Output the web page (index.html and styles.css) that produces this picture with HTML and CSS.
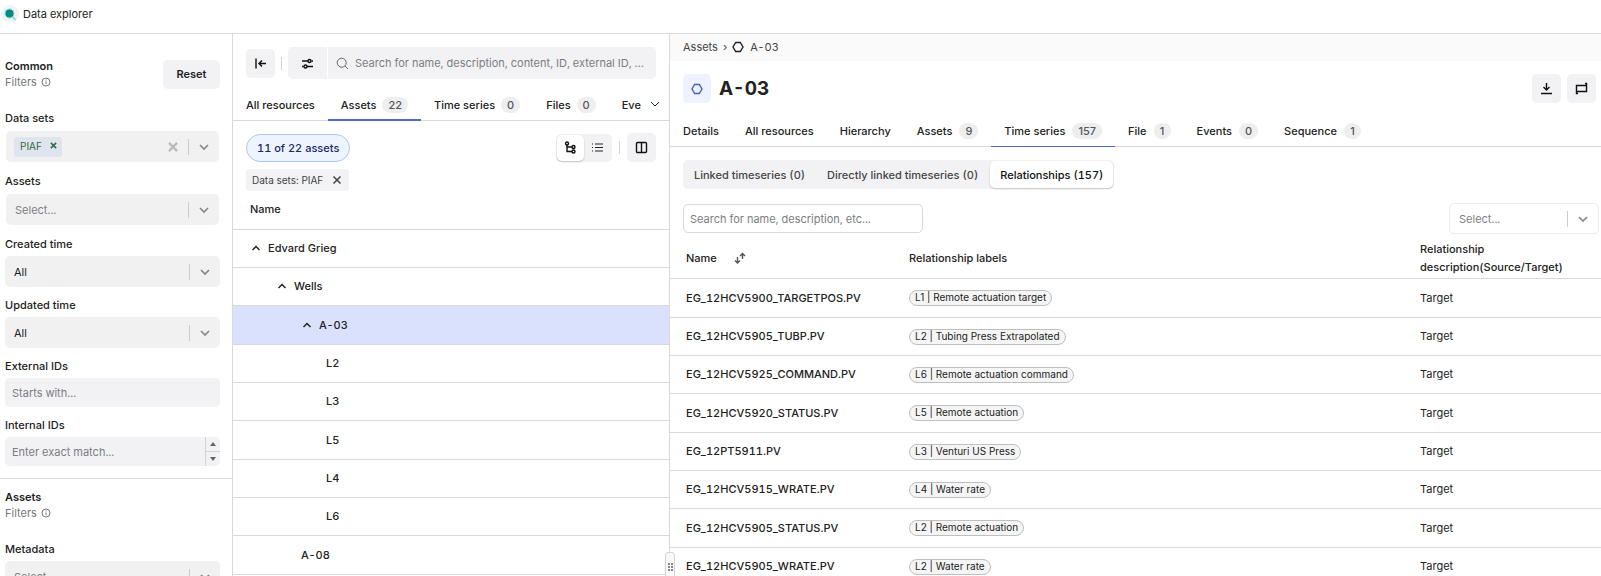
FILE: index.html
```html
<!DOCTYPE html>
<html lang="en">
<head>
    <meta charset="UTF-8">
    <meta name="viewport" content="width=device-width, initial-scale=1.0">
    <title>Data explorer</title>
    <link rel="stylesheet" href="styles.css">
</head>
<body>
    <!-- shared icons -->
    <svg class="sprite" aria-hidden="true">
        <symbol id="chevron-down" viewBox="0 0 12 12"><path d="M2 4l4 4 4-4"/></symbol>
        <symbol id="chevron-up" viewBox="0 0 12 12"><path d="M2.5 8L6 4.5 9.5 8"/></symbol>
        <symbol id="cross" viewBox="0 0 12 12"><path d="M2.5 2.5l7 7M9.5 2.5l-7 7"/></symbol>
        <symbol id="info" viewBox="0 0 12 12"><circle cx="6" cy="6" r="4"/><path d="M6 5.5v2.7M6 3.6v1"/></symbol>
        <symbol id="hexagon" viewBox="0 0 12 12"><path d="M3.7 1.5h4.6L11 6l-2.7 4.5H3.7L1 6z"/></symbol>
    </svg>

    <header class="topbar">
        <span class="logo">
            <svg width="18" height="18" viewBox="0 0 18 18"><path d="M11 11l3.5 4" stroke="#8fe0dc" stroke-width="2"/><circle cx="8.5" cy="8.5" r="4.5" fill="#058a86" stroke="#8fe0dc" stroke-width="1"/></svg>
        </span>
        <span>Data explorer</span>
    </header>

    <main class="layout">
        <aside class="filters">
            <section class="filter-group">
                <div class="filter-head">
                    <div>
                        <h2>Common</h2>
                        <p>Filters <svg class="icon"><use href="#info"/></svg></p>
                    </div>
                    <button class="btn reset">Reset</button>
                </div>
                <div class="field">
                    <label for="datasets">Data sets</label>
                    <div class="select inset">
                        <span class="tag">PIAF <button aria-label="Remove PIAF"><svg class="icon"><use href="#cross"/></svg></button></span>
                        <input id="datasets" type="text">
                        <button class="clear" aria-label="Clear"><svg class="icon"><use href="#cross"/></svg></button>
                        <svg class="icon arrow"><use href="#chevron-down"/></svg>
                    </div>
                </div>
                <div class="field">
                    <label for="assets">Assets</label>
                    <div class="select inset">
                        <select id="assets" class="empty"><option>Select...</option></select>
                        <svg class="icon arrow"><use href="#chevron-down"/></svg>
                    </div>
                </div>
                <div class="field">
                    <label for="created">Created time</label>
                    <div class="select">
                        <select id="created"><option>All</option></select>
                        <svg class="icon arrow"><use href="#chevron-down"/></svg>
                    </div>
                </div>
                <div class="field">
                    <label for="updated">Updated time</label>
                    <div class="select">
                        <select id="updated"><option>All</option></select>
                        <svg class="icon arrow"><use href="#chevron-down"/></svg>
                    </div>
                </div>
                <div class="field">
                    <label for="external">External IDs</label>
                    <div class="textbox"><input id="external" type="text" placeholder="Starts with..."></div>
                </div>
                <div class="field">
                    <label for="internal">Internal IDs</label>
                    <div class="textbox">
                        <input id="internal" type="number" placeholder="Enter exact match...">
                        <div class="spinner">
                            <button aria-label="Increase"><svg width="6" height="4"><path d="M0 4l3-4 3 4z"/></svg></button>
                            <button aria-label="Decrease"><svg width="6" height="4"><path d="M0 0l3 4 3-4z"/></svg></button>
                        </div>
                    </div>
                </div>
            </section>
            <section class="filter-group">
                <div class="filter-head">
                    <div>
                        <h2>Assets</h2>
                        <p>Filters <svg class="icon"><use href="#info"/></svg></p>
                    </div>
                </div>
                <div class="field">
                    <label for="metadata">Metadata</label>
                    <div class="select">
                        <select id="metadata" class="empty"><option>Select...</option></select>
                        <svg class="icon arrow"><use href="#chevron-down"/></svg>
                    </div>
                </div>
            </section>
        </aside>

        <section class="results">
            <div class="search-row">
                <button class="btn square" aria-label="Hide filters">
                    <svg width="13" height="13" viewBox="0 0 13 13"><path d="M2 1.5v10M12 6.5H5M8 3.5l-3 3 3 3"/></svg>
                </button>
                <span class="divider"></span>
                <div class="search">
                    <button aria-label="Search options">
                        <svg width="13" height="13" viewBox="0 0 13 13"><path d="M1 4h6M10.5 4H12M1 9.5h1.5M6 9.5h6"/><circle cx="8.5" cy="4" r="1.5"/><circle cx="4.5" cy="9.5" r="1.5"/></svg>
                    </button>
                    <label for="query"><svg width="13" height="13" viewBox="0 0 13 13"><circle cx="5.7" cy="5.7" r="4.5"/><path d="M9 9l3 3"/></svg></label>
                    <input id="query" type="text" placeholder="Search for name, description, content, ID, external ID, and other metadata">
                </div>
            </div>
            <div class="tab-row">
                <nav class="tabs">
                    <button>All resources</button>
                    <button class="active">Assets <span class="count">22</span></button>
                    <button>Time series <span class="count">0</span></button>
                    <button>Files <span class="count">0</span></button>
                    <button>Events</button>
                </nav>
                <button class="more" aria-label="More tabs"><svg class="icon"><use href="#chevron-down"/></svg></button>
            </div>
            <div class="toolbar">
                <span class="total">11 of 22 assets</span>
                <div class="view-toggle">
                    <button class="active" aria-label="Tree view">
                        <svg width="13" height="13" viewBox="0 0 13 13"><circle cx="3" cy="2.5" r="1.5"/><path d="M3 4v6.5h5M3 6h5"/><circle cx="9.5" cy="6" r="1.5"/><circle cx="9.5" cy="10.5" r="1.5"/></svg>
                    </button>
                    <button aria-label="List view">
                        <svg width="13" height="13" viewBox="0 0 13 13"><path d="M1 3h1M4 3h8M1 6.5h1M4 6.5h8M1 10h1M4 10h8"/></svg>
                    </button>
                </div>
                <span class="divider"></span>
                <button class="btn square" aria-label="Columns">
                    <svg width="13" height="13" viewBox="0 0 13 13"><rect x="1.5" y="1.5" width="10" height="10" rx="1"/><path d="M6.5 1.5v10"/></svg>
                </button>
            </div>
            <div class="chips">
                <span class="chip">Data sets: PIAF <button aria-label="Remove filter"><svg class="icon"><use href="#cross"/></svg></button></span>
            </div>
            <table class="tree">
                <thead>
                    <tr><th>Name</th></tr>
                </thead>
                <tbody>
                    <tr><td class="level-0"><button aria-label="Collapse"><svg class="icon"><use href="#chevron-up"/></svg></button>Edvard Grieg</td></tr>
                    <tr><td class="level-1"><button aria-label="Collapse"><svg class="icon"><use href="#chevron-up"/></svg></button>Wells</td></tr>
                    <tr class="selected"><td class="level-2"><button aria-label="Collapse"><svg class="icon"><use href="#chevron-up"/></svg></button>A-03</td></tr>
                    <tr><td class="level-3">L2</td></tr>
                    <tr><td class="level-3">L3</td></tr>
                    <tr><td class="level-3">L5</td></tr>
                    <tr><td class="level-3">L4</td></tr>
                    <tr><td class="level-3">L6</td></tr>
                    <tr><td class="level-2">A-08</td></tr>
                </tbody>
            </table>
            <div class="resizer">
                <svg width="5" height="8" viewBox="0 0 5 8"><path d="M0 0h2v2H0zM3 0h2v2H3zM0 3h2v2H0zM3 3h2v2H3zM0 6h2v2H0zM3 6h2v2H3z"/></svg>
            </div>
        </section>

        <section class="details">
            <nav class="breadcrumb">
                <a href="#">Assets</a>
                <span>›</span>
                <svg class="icon"><use href="#hexagon"/></svg>
                <a href="#">A-03</a>
            </nav>
            <div class="title-row">
                <span class="asset-icon"><svg class="icon"><use href="#hexagon"/></svg></span>
                <h1>A-03</h1>
                <button class="btn square" aria-label="Download">
                    <svg width="13" height="13" viewBox="0 0 13 13"><path d="M6.5 1v7M3.5 5l3 3 3-3M1 11.5h11"/></svg>
                </button>
                <button class="btn square" aria-label="Open in">
                    <svg width="13" height="13" viewBox="0 0 13 13"><path d="M1.5 10V3.5h10M11.5 3v6.5h-10M10 1.5h1.5v2.500M3 11.500H1.500V9"/></svg>
                </button>
            </div>
            <nav class="tabs">
                <button>Details</button>
                <button>All resources</button>
                <button>Hierarchy</button>
                <button>Assets <span class="count">9</span></button>
                <button class="active">Time series <span class="count">157</span></button>
                <button>File <span class="count">1</span></button>
                <button>Events <span class="count">0</span></button>
                <button>Sequence <span class="count">1</span></button>
            </nav>
            <div class="segmented">
                <button>Linked timeseries (0)</button>
                <button>Directly linked timeseries (0)</button>
                <button class="active">Relationships (157)</button>
            </div>
            <div class="table-tools">
                <input type="text" aria-label="Search relationships" placeholder="Search for name, description, etc...">
                <div class="select outlined">
                    <select class="empty" aria-label="Relationship label"><option>Select...</option></select>
                    <svg class="icon arrow"><use href="#chevron-down"/></svg>
                </div>
            </div>
            <table class="relations">
                <colgroup>
                    <col class="col-name">
                    <col>
                    <col class="col-desc">
                </colgroup>
                <thead>
                    <tr>
                        <th>Name <button class="sort" aria-label="Sort"><svg width="12" height="12" viewBox="0 0 12 12"><path d="M8.5 7V1.5M6 4l2.5-2.5L11 4M3.5 5v6M1 8.5L3.5 11 6 8.5"/></svg></button></th>
                        <th>Relationship labels</th>
                        <th>Relationship description(Source/Target)</th>
                    </tr>
                </thead>
                <tbody>
                    <tr><td>EG_12HCV5900_TARGETPOS.PV</td><td><span class="pill">L1 | Remote actuation target</span></td><td>Target</td></tr>
                    <tr><td>EG_12HCV5905_TUBP.PV</td><td><span class="pill">L2 | Tubing Press Extrapolated</span></td><td>Target</td></tr>
                    <tr><td>EG_12HCV5925_COMMAND.PV</td><td><span class="pill">L6 | Remote actuation command</span></td><td>Target</td></tr>
                    <tr><td>EG_12HCV5920_STATUS.PV</td><td><span class="pill">L5 | Remote actuation</span></td><td>Target</td></tr>
                    <tr><td>EG_12PT5911.PV</td><td><span class="pill">L3 | Venturi US Press</span></td><td>Target</td></tr>
                    <tr><td>EG_12HCV5915_WRATE.PV</td><td><span class="pill">L4 | Water rate</span></td><td>Target</td></tr>
                    <tr><td>EG_12HCV5905_STATUS.PV</td><td><span class="pill">L2 | Remote actuation</span></td><td>Target</td></tr>
                    <tr><td>EG_12HCV5905_WRATE.PV</td><td><span class="pill">L2 | Water rate</span></td><td>Target</td></tr>
                </tbody>
            </table>
        </section>
    </main>
</body>
</html>
```
FILE: styles.css
```css
* {
    box-sizing: border-box;
}
body {
    margin: 0;
    height: 100vh;
    display: flex;
    flex-direction: column;
    overflow: hidden;
    font-family: Inter, sans-serif;
    font-size: 11px;
    line-height: 16px;
    font-variant-numeric: tabular-nums;
    color: #222;
    background: #fff;
}
h1, h2, p {
    margin: 0;
}
button, input, select {
    font: inherit;
    font-variant-numeric: inherit;
    color: inherit;
    border: none;
    background: none;
    padding: 0;
    margin: 0;
    outline: none;
}
button {
    display: flex;
    align-items: center;
    justify-content: center;
    cursor: pointer;
}
a {
    color: inherit;
    text-decoration: none;
}
svg {
    flex: none;
    fill: none;
    stroke: currentColor;
}
::placeholder {
    color: #7d7d82;
    opacity: 1;
}
.sprite {
    position: absolute;
    width: 0;
    height: 0;
}
.icon {
    width: 12px;
    height: 12px;
}
.btn {
    height: 29px;
    background: #f2f2f5;
    border-radius: 5px;
    font-weight: 500;
}
.square {
    width: 29px;
}
.btn svg, .search button svg, .view-toggle .active svg {
    color: #111;
    stroke-width: 1.4;
}
.divider {
    width: 1px;
    height: 13px;
    background: #d4d4d8;
}

.topbar {
    display: flex;
    align-items: center;
    gap: 4px;
    height: 34px;
    padding: 0 1px 5px;
    border-bottom: 1px solid #d9d9d9;
}
.logo {
    display: flex;
    border-radius: 50%;
    background: #f3f3f3;
}
.logo svg {
    stroke: none;
}
.layout {
    flex: 1;
    min-height: 0;
    display: grid;
    grid-template-columns: 233px 437px 1fr;
    grid-template-rows: minmax(0, 1fr);
}

/* left filters */
.filters {
    border-right: 1px solid #d9d9d9;
    overflow: hidden;
}
.filter-group {
    display: flex;
    flex-direction: column;
    gap: 10px;
    padding: 24px 12px 12px 5px;
}
.filter-group + .filter-group {
    padding-top: 10px;
    border-top: 1px solid #d9d9d9;
}
.filter-head {
    display: flex;
    align-items: center;
    justify-content: space-between;
    height: 32px;
    margin-bottom: 10px;
}
.filter-head h2 {
    font-size: 11px;
    font-weight: 600;
}
.filter-head p {
    display: flex;
    align-items: center;
    gap: 3px;
    color: #77777c;
}
.reset {
    width: 57px;
    font-weight: 600;
}
.field {
    display: flex;
    flex-direction: column;
    gap: 4px;
}
.field label {
    font-weight: 500;
}
.select {
    display: flex;
    align-items: center;
    height: 31px;
    background: #f1f1f1;
    border-radius: 5px;
    padding-right: 9px;
}
.select.inset {
    margin: 1px;
}
.select select, .select input {
    flex: 1;
    min-width: 0;
    height: 100%;
    padding-left: 9px;
    appearance: none;
}
.select select.empty {
    color: #808085;
}
.arrow {
    box-sizing: content-box;
    height: 16px;
    padding-left: 9px;
    border-left: 1px solid #ccc;
    color: #88888c;
    stroke-width: 1.7;
    pointer-events: none;
}
.tag {
    display: flex;
    align-items: center;
    gap: 7px;
    height: 20px;
    margin-left: 8px;
    padding: 0 4px 2px 6px;
    border-radius: 3px;
    background: #dfe4ee;
    color: #33693f;
    font-size: 10px;
}
.tag svg {
    width: 9px;
    height: 9px;
    stroke-width: 2;
}
.clear {
    margin-right: 8px;
    color: #bbb;
}
.clear svg {
    width: 14px;
    height: 14px;
    stroke-width: 2;
}
.textbox {
    display: flex;
    height: 29px;
    border-radius: 5px;
    background: #f2f2f5;
    overflow: hidden;
}
.textbox input {
    flex: 1;
    min-width: 0;
    padding: 0 7px;
    appearance: textfield;
}
.spinner {
    width: 15px;
    border-left: 1px solid #d4d4d8;
    display: flex;
    flex-direction: column;
    color: #666;
}
.spinner button {
    flex: 1;
}
.spinner button + button {
    border-top: 1px solid #d4d4d8;
}
.spinner svg {
    fill: currentColor;
    stroke: none;
}

/* middle list */
.results {
    position: relative;
    border-right: 1px solid #d9d9d9;
}
.search-row {
    display: flex;
    align-items: center;
    gap: 6px;
    padding: 13px 13px 0;
}
.search {
    flex: 1;
    min-width: 0;
    display: flex;
    align-items: center;
    height: 32px;
    background: #f2f2f5;
    border-radius: 5px;
}
.search button {
    width: 40px;
    height: 32px;
    border-right: 1px solid #fff;
}
.search label {
    display: flex;
    margin: 0 6px 0 8px;
    color: #66666b;
}
.search input {
    flex: 1;
    min-width: 0;
    margin-right: 7px;
    text-overflow: ellipsis;
}
.tab-row {
    display: flex;
    border-bottom: 1px solid #d9d9d9;
}
.tabs {
    display: flex;
}
.tabs button {
    height: 33px;
    gap: 7px;
    padding: 0 13px;
    font-weight: 500;
    white-space: nowrap;
}
.tab-row .tabs {
    width: 408px;
    height: 42px;
    padding-top: 9px;
    margin-bottom: -1px;
    overflow: hidden;
}
.tab-row .tabs button {
    gap: 6px;
}
.tab-row .active {
    box-shadow: inset 0 -2px #5369c6;
}
.more {
    width: 27px;
    padding-top: 8px;
}
.count {
    min-width: 17px;
    padding: 0 6px;
    border-radius: 8px;
    background: #eee;
    color: #55555a;
    font-variant-numeric: normal;
    text-align: center;
}
.toolbar {
    display: flex;
    align-items: center;
    gap: 7px;
    padding: 12px 13px 0;
}
.total {
    margin-right: auto;
    padding: 5px 10px;
    border: 1px solid #a9caf2;
    border-radius: 14px;
    background: #edf4fe;
    color: #1d2a66;
    font-weight: 500;
}
.view-toggle {
    display: flex;
    padding: 1px;
    border-radius: 5px;
    background: #f2f2f5;
}
.view-toggle button {
    width: 27px;
    height: 26px;
}
.view-toggle .active, .segmented .active {
    border-radius: 5px;
    background: #fff;
    box-shadow: 0 1px 2px rgba(0, 0, 0, 0.2);
}
.chips {
    padding: 7px 13px 0;
}
.chip {
    display: inline-flex;
    align-items: center;
    gap: 8px;
    height: 22px;
    padding: 0 6px;
    border-radius: 4px;
    background: #f2f2f5;
    color: #444;
    font-size: 10px;
}
.chip svg {
    stroke-width: 1.5;
}
table {
    width: 100%;
    border-collapse: collapse;
    table-layout: fixed;
}
th, td {
    padding: 0;
    text-align: left;
    border-bottom: 1px solid #d9d9d9;
}
th {
    font-weight: 500;
}
.tree th {
    height: 38px;
    padding: 0 17px 2px;
}
.tree td {
    height: 38px;
    font-weight: 500;
}
.tree tr:nth-child(3n) td, .relations tr:nth-child(3n+1) td {
    height: 39px;
}
.tree td button {
    display: inline-flex;
    margin-right: 6px;
    vertical-align: -2px;
    stroke-width: 1.5;
}
.level-0 {
    padding-left: 17px;
}
.level-1 {
    padding-left: 43px;
}
.level-2 {
    padding-left: 68px;
}
.level-3 {
    padding-left: 93px;
}
.selected {
    background: #dae1fd;
}
.resizer {
    position: absolute;
    right: -6px;
    bottom: -5px;
    width: 10px;
    height: 29px;
    display: flex;
    align-items: center;
    justify-content: center;
    border: 1px solid #d4d4d4;
    border-radius: 3px;
    background: #f8f8f8;
    cursor: col-resize;
}
.resizer svg {
    fill: #888;
    stroke: none;
}

/* right details */
.details {
    min-width: 0;
    display: flex;
    flex-direction: column;
}
.details > * {
    flex-shrink: 0;
}
.breadcrumb {
    display: flex;
    align-items: center;
    gap: 5px;
    height: 27px;
    padding: 0 13px 1px;
    background: #fafafa;
    color: #444;
}
.breadcrumb svg {
    margin-right: 1px;
    color: #222;
    stroke-width: 1.4;
}
.title-row {
    display: flex;
    align-items: center;
    gap: 6px;
    padding: 13px 5px 11px 13px;
}
.asset-icon {
    display: flex;
    align-items: center;
    justify-content: center;
    width: 28px;
    height: 29px;
    border-radius: 5px;
    background: #edf2fe;
    color: #4560c0;
    stroke-width: 1.4;
}
.title-row h1 {
    margin: 0 auto 0 2px;
    font-size: 19px;
    line-height: 24px;
    font-weight: 700;
}
.details .tabs {
    border-bottom: 1px solid #d9d9d9;
}
.details .tabs button {
    margin-bottom: -1px;
}
.details .tabs .active {
    box-shadow: inset 0 -1px #5369c6;
}
.segmented {
    align-self: flex-start;
    display: flex;
    gap: 2px;
    height: 29px;
    margin: 13px 13px 15px;
    padding: 1px;
    border-radius: 5px;
    background: #f2f2f5;
    color: #444;
    font-weight: 500;
}
.segmented button {
    padding: 0 10px;
}
.segmented .active {
    color: #111;
}
.table-tools {
    display: flex;
    align-items: center;
    justify-content: space-between;
    height: 29px;
    padding: 0 2px 0 13px;
}
.table-tools > input {
    width: 240px;
    height: 29px;
    padding: 0 6px;
    border: 1px solid #d9d9d9;
    border-radius: 5px;
}
.outlined {
    width: 150px;
    border: 1px solid #ececec;
    background: #fff;
}
.relations th, .relations td {
    padding-left: 16px;
}
.relations th {
    height: 45px;
    padding-top: 6px;
    line-height: 18px;
}
.relations td {
    height: 38px;
}
.relations td:first-child {
    font-weight: 500;
}
.relations td + td, .relations th + th {
    padding-left: 0;
}
.relations th:last-child {
    padding-right: 40px;
}
.col-name {
    width: 239px;
}
.col-desc {
    width: 181px;
}
.sort {
    display: inline-flex;
    margin-left: 14px;
    vertical-align: -2px;
    color: #55555a;
    stroke-width: 1.4;
}
.pill {
    display: inline-block;
    padding: 0 5px 1px;
    border: 1px solid #bfbfbf;
    border-radius: 8px;
    background: #f5f5f5;
    font-size: 10px;
    font-variant-numeric: normal;
    line-height: 13px;
    vertical-align: middle;
}
```
